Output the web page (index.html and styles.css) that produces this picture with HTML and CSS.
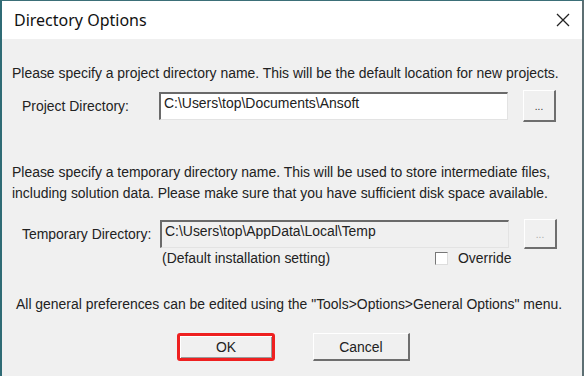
FILE: index.html
```html
<!DOCTYPE html>
<html>
<head>
<meta charset="utf-8">
<link rel="stylesheet" href="styles.css">
</head>
<body>
<div class="window">
  <div class="titlebar">
    <span class="title">Directory Options</span>
    <svg class="close" width="14" height="14" viewBox="0 0 14 14"><path d="M1 1 L13 13 M13 1 L1 13" stroke="#222" stroke-width="1.3" fill="none"/></svg>
  </div>
  <div class="content">
    <p class="para p1">Please specify a project directory name. This will be the default location for new projects.</p>
    <div class="row row-proj">
      <span class="label">Project Directory:</span>
      <div class="field">C:\Users\top\Documents\Ansoft</div>
      <div class="browse">...</div>
    </div>
    <p class="para p2">Please specify a temporary directory name. This will be used to store intermediate files,<br>including solution data. Please make sure that you have sufficient disk space available.</p>
    <div class="row row-temp">
      <span class="label">Temporary Directory:</span>
      <div class="field disabled">C:\Users\top\AppData\Local\Temp</div>
      <div class="browse disabled">...</div>
    </div>
    <div class="row row-default">
      <span class="note">(Default installation setting)</span>
      <span class="check"></span>
      <span class="override">Override</span>
    </div>
    <p class="para p3">All general preferences can be edited using the "Tools&gt;Options&gt;General Options" menu.</p>
    <div class="buttons">
      <div class="btn ok">OK</div>
      <div class="btn">Cancel</div>
    </div>
  </div>
</div>
</body>
</html>
```
FILE: styles.css
```css
html, body { margin: 0; padding: 0; background: #dcdcdc; }
body { width: 584px; height: 376px; overflow: hidden; }
.window {
  width: 580px; height: 375px;
  border-top: 1px solid #3b6f78;
  border-left: 2px solid #2f6b75;
  border-right: 2px solid #5d6f73;
  background: #f0f0f0;
  display: flex; flex-direction: column;
  font-family: "Liberation Sans", Arial, sans-serif;
  color: #222;
}
.titlebar {
  height: 38px; background: #fff;
  display: flex; align-items: center; justify-content: space-between;
  padding: 0 12px 0 12px;
}
.title { font-family: "Noto Sans", "Open Sans", sans-serif; font-size: 16px; color: #111; }
.content { font-size: 13.95px; }
.para { margin: 0; line-height: 20px; padding-left: 10px; white-space: nowrap; }
.p1 { margin-top: 24px; }
.row { display: flex; align-items: center; }
.row-proj { margin-top: 7px; height: 32px; }
.label { width: 157px; padding-left: 20px; box-sizing: border-box; }
.row-temp .label { width: 158px; }
.field {
  width: 349px; height: 28px; box-sizing: border-box;
  background: #fff;
  border-top: 2px solid #6a6a6a; border-left: 2px solid #6a6a6a;
  border-right: 1px solid #e3e3e3; border-bottom: 1px solid #e3e3e3;
  padding: 2px 0 0 3px; line-height: 15px;
}
.field.disabled { background: #f0f0f0; }
.browse {
  margin-left: 15px; width: 33px; height: 32px; box-sizing: border-box;
  background: #f0f0f0;
  border-top: 1px solid #fff; border-left: 1px solid #fff;
  border-right: 2px solid #6e6e6e; border-bottom: 2px solid #6e6e6e;
  display: flex; align-items: center; justify-content: center;
  font-size: 10px; color: #333; padding-top: 2px;
}
.browse.disabled { color: #aaa; height: 30px; }
.p2 { margin-top: 40px; line-height: 21px; }
.row-temp { margin-top: 14px; height: 31px; }
.row-default { height: 18px; padding-left: 160px; }
.note { width: 273px; }
.check { width: 13px; height: 13px; box-sizing: border-box; background: #fff; border-top: 1px solid #777; border-left: 1px solid #777; border-right: 1px solid #ddd; border-bottom: 1px solid #ddd; }
.override { margin-left: 10px; }
.p3 { margin-top: 27px; padding-left: 14px; }
.buttons { display: flex; margin-top: 19px; padding-left: 175px; gap: 38px; }
.btn {
  width: 97px; height: 28px; box-sizing: border-box;
  background: #f0f0f0;
  border-top: 1px solid #fff; border-left: 1px solid #fff;
  border-right: 2px solid #6e6e6e; border-bottom: 2px solid #6e6e6e;
  display: flex; align-items: center; justify-content: center;
}
.btn.ok { border: 3px solid #ee2020; border-radius: 3px; width: 98px; box-shadow: inset 1px 1px 0 #fff, inset -1px -1px 0 #9a9a9a; }
```
